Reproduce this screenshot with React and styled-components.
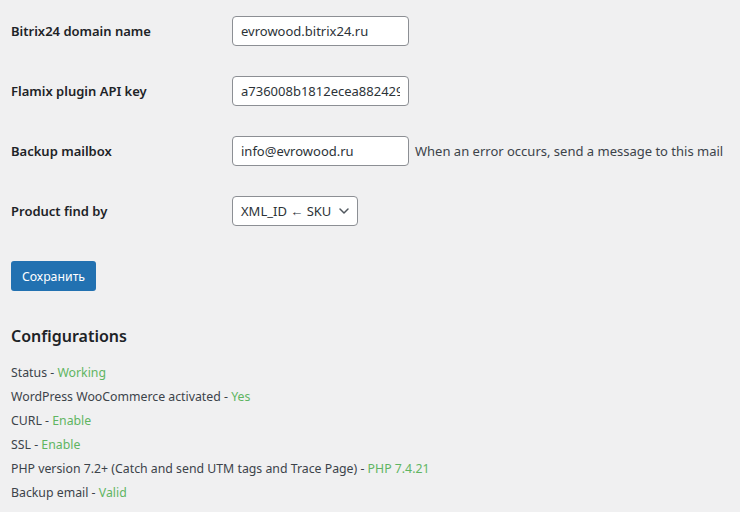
import React from 'react';
import styled, { createGlobalStyle } from 'styled-components';

const GlobalStyle = createGlobalStyle`
  html, body {
    margin: 0;
    padding: 0;
    background: #f0f0f1;
  }
  body {
    font-family: "Segoe UI", "Noto Sans", sans-serif;
    color: #3c434a;
    font-size: 12.3px;
  }
`;

const Page = styled.div`
  padding: 1px 11px 0;
  width: 740px;
  height: 512px;
  box-sizing: border-box;
  overflow: hidden;
`;

const FormTable = styled.div`
  display: flex;
  flex-direction: column;
`;

const Row = styled.div`
  display: flex;
  align-items: center;
  padding: 15px 0;
`;

const Label = styled.label`
  width: 221px;
  flex-shrink: 0;
  font-size: 13px;
  font-weight: 600;
  color: #1d2327;
`;

const Field = styled.div`
  display: flex;
  align-items: center;
  gap: 6px;
  white-space: nowrap;
`;

const TextInput = styled.input`
  width: 177px;
  height: 30px;
  box-sizing: border-box;
  padding: 0 8px;
  border: 1px solid #8c8f94;
  border-radius: 4px;
  background: #fff;
  font-family: inherit;
  font-size: 13px;
  color: #2c3338;
  outline: none;
`;

const Hint = styled.span`
  font-size: 13px;
  color: #3c434a;
`;

const SelectBox = styled.div`
  width: 126px;
  height: 30px;
  box-sizing: border-box;
  display: flex;
  align-items: center;
  justify-content: space-between;
  padding: 0 7px 0 8px;
  border: 1px solid #8c8f94;
  border-radius: 4px;
  background: #fff;
  font-size: 13px;
  color: #2c3338;
`;

const SaveButton = styled.button`
  display: block;
  margin-top: 20px;
  width: 85px;
  height: 30px;
  border: none;
  border-radius: 3px;
  background: #2271b1;
  color: #fff;
  font-family: inherit;
  font-size: 12.3px;
  padding: 0;
`;

const Heading = styled.h2`
  margin: 34px 0 14px;
  font-size: 16px;
  line-height: 22px;
  font-weight: 600;
  color: #1d2327;
`;

const StatusList = styled.div`
  display: flex;
  flex-direction: column;
`;

const StatusLine = styled.div`
  line-height: 24px;
  color: #3c434a;
`;

const Ok = styled.span`
  color: #5fb562;
`;

const statuses = [
  ['Status', 'Working'],
  ['WordPress WooCommerce activated', 'Yes'],
  ['CURL', 'Enable'],
  ['SSL', 'Enable'],
  ['PHP version 7.2+ (Catch and send UTM tags and Trace Page)', 'PHP 7.4.21'],
  ['Backup email', 'Valid'],
];

function Chevron() {
  return (
    <svg width="12" height="12" viewBox="0 0 12 12" fill="none">
      <path d="M2 4l4 4 4-4" stroke="#50575e" strokeWidth="1.5" strokeLinecap="round" strokeLinejoin="round" />
    </svg>
  );
}

export default function App() {
  return (
    <Page>
      <GlobalStyle />
      <FormTable>
        <Row>
          <Label>Bitrix24 domain name</Label>
          <Field>
            <TextInput defaultValue="evrowood.bitrix24.ru" />
          </Field>
        </Row>
        <Row>
          <Label>Flamix plugin API key</Label>
          <Field>
            <TextInput defaultValue="a736008b1812ecea882429f3c1d05a7e" />
          </Field>
        </Row>
        <Row>
          <Label>Backup mailbox</Label>
          <Field>
            <TextInput defaultValue="info@evrowood.ru" />
            <Hint>When an error occurs, send a message to this mail</Hint>
          </Field>
        </Row>
        <Row>
          <Label>Product find by</Label>
          <Field>
            <SelectBox>
              <span>XML_ID ← SKU</span>
              <Chevron />
            </SelectBox>
          </Field>
        </Row>
      </FormTable>
      <SaveButton>Сохранить</SaveButton>
      <Heading>Configurations</Heading>
      <StatusList>
        {statuses.map(([name, value]) => (
          <StatusLine key={name}>
            {name} - <Ok>{value}</Ok>
          </StatusLine>
        ))}
      </StatusList>
    </Page>
  );
}
